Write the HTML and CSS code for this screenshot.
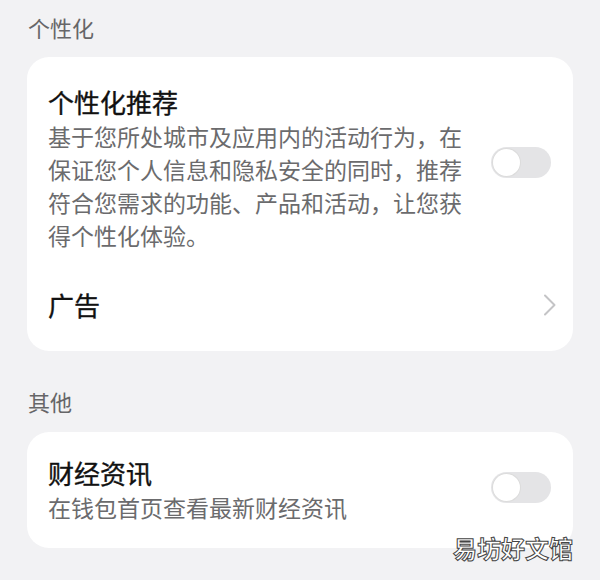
FILE: index.html
```html
<!DOCTYPE html>
<html lang="zh-CN">
<head>
<meta charset="utf-8">
<link rel="stylesheet" href="styles.css">
</head>
<body>
<div class="page">
  <div class="section-title">个性化</div>
  <div class="card">
    <div class="item item-main">
      <div class="item-text">
        <div class="item-title">个性化推荐</div>
        <div class="item-desc">基于您所处城市及应用内的活动行为，在保证您个人信息和隐私安全的同时，推荐符合您需求的功能、产品和活动，让您获得个性化体验。</div>
      </div>
      <div class="switch"><div class="knob"></div></div>
    </div>
    <div class="item item-link">
      <div class="item-title">广告</div>
      <svg class="chevron" width="14" height="22" viewBox="0 0 14 22"><path d="M2 1.5 L11.5 11 L2 20.5" fill="none" stroke="#c4c4c6" stroke-width="2" stroke-linecap="round" stroke-linejoin="round"/></svg>
    </div>
  </div>
  <div class="section-title section-gap">其他</div>
  <div class="card card-two">
    <div class="item">
      <div class="item-text">
        <div class="item-title">财经资讯</div>
        <div class="item-desc">在钱包首页查看最新财经资讯</div>
      </div>
      <div class="switch"><div class="knob"></div></div>
    </div>
  </div>
  <div class="watermark">易坊好文馆</div>
</div>
</body>
</html>
```
FILE: styles.css
```css
html, body {
  margin: 0;
  padding: 0;
  background: #f2f2f4;
}
body {
  font-family: "Noto Sans CJK SC", "Noto Sans", sans-serif;
  width: 600px;
  height: 580px;
  overflow: hidden;
}
.page {
  position: relative;
  height: 580px;
  padding: 12px 27px 0 27px;
  box-sizing: border-box;
}
.section-title {
  font-size: 22px;
  line-height: 30px;
  color: #666668;
  padding-left: 1px;
  margin-bottom: 15px;
}
.section-gap {
  margin-top: 35px;
  margin-bottom: 16px;
}
.card {
  background: #ffffff;
  border-radius: 22px;
}
.item {
  display: flex;
  align-items: center;
  padding: 0 22px 0 21px;
}
.item-main {
  padding-top: 28px;
  padding-bottom: 14px;
}
.item-text {
  flex: 1;
}
.item-title {
  font-size: 26px;
  line-height: 34px;
  color: #111111;
  font-weight: 400;
  -webkit-text-stroke: 0.35px #111111;
}
.item-desc {
  font-size: 23px;
  line-height: 33px;
  color: #6b6b6d;
  width: 420px;
  margin-top: 1px;
}
.item-link {
  height: 85px;
  box-sizing: border-box;
  padding-bottom: 8px;
  justify-content: space-between;
}
.chevron {
  margin-right: -6px;
}
.card-two .item {
  padding-top: 24px;
  padding-bottom: 24px;
}
.switch {
  width: 60px;
  height: 31px;
  border-radius: 16px;
  background: #e4e4e6;
  position: relative;
  flex-shrink: 0;
  margin-top: -12px;
}
.card-two .switch {
  margin-top: -6px;
}
.knob {
  position: absolute;
  left: 2px;
  top: 2px;
  width: 27px;
  height: 27px;
  border-radius: 50%;
  background: #ffffff;
  box-shadow: 0 0 0 1px #dcdcdc;
}
.watermark {
  position: absolute;
  right: 27px;
  top: 533px;
  font-size: 24px;
  line-height: 30px;
  font-weight: 700;
  color: #ffffff;
  -webkit-text-stroke: 1px #444;
}
```
